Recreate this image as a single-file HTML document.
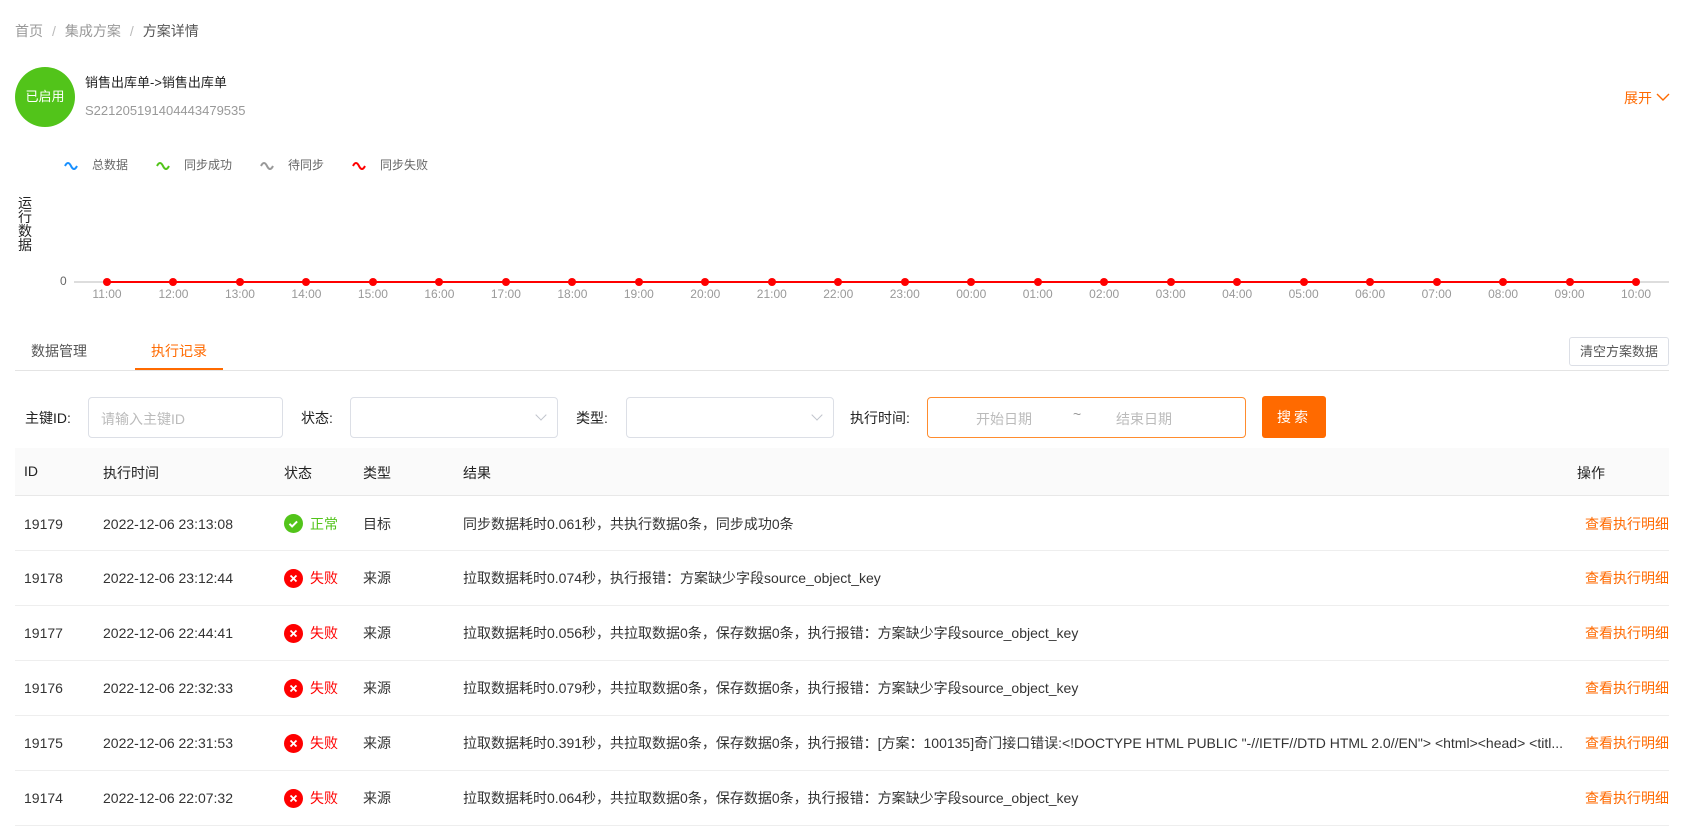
<!DOCTYPE html>
<html><head><meta charset="utf-8"><style>
*{margin:0;padding:0;box-sizing:border-box}
body{width:1685px;height:835px;background:#fff;font-family:"Liberation Sans","Noto Sans CJK SC",sans-serif;color:#333;position:relative;overflow:hidden;font-size:14px}
.a{position:absolute;white-space:nowrap}
.g{color:#999}
.tick{position:absolute;top:287px;font-size:12px;color:#999;width:50px;text-align:center}
.dot{position:absolute;top:278px;width:8px;height:8px;border-radius:50%;background:#f00}
.row{position:absolute;left:15px;width:1654px;height:55px;border-bottom:1px solid #eee}
.row .a{top:50%;transform:translateY(-50%)}
.ico{display:inline-block;width:19px;height:19px;border-radius:50%;color:#fff;text-align:center;vertical-align:middle;position:relative}
.op{color:#ff6a00;left:1570px}
.inp{position:absolute;border:1px solid #dcdfe6;border-radius:4px;height:41px;top:397px}
.chev{position:absolute;right:12px;top:13px;width:8px;height:8px;border-right:1px solid #c0c4cc;border-bottom:1px solid #c0c4cc;transform:rotate(45deg)}
</style></head><body>
<div class="a" style="left:15px;top:21px;font-size:14px"><span class="g">首页</span><span style="color:#bbb;margin:0 9px">/</span><span class="g">集成方案</span><span style="color:#bbb;margin:0 9px">/</span><span style="color:#555">方案详情</span></div>
<div class="a" style="left:15px;top:67px;width:60px;height:60px;border-radius:50%;background:#52c41a;color:#fff;font-size:13px;line-height:60px;text-align:center">已启用</div>
<div class="a" style="left:85px;top:72px;font-size:13px;color:#222">销售出库单-&gt;销售出库单</div>
<div class="a" style="left:85px;top:103px;font-size:13px;color:#999">S221205191404443479535</div>
<div class="a" style="left:1624px;top:88px;font-size:14px;color:#ff6a00">展开 <svg width="14" height="10" viewBox="0 0 14 10" style="vertical-align:1px"><path d="M1 2l6 6 6-6" stroke="#ff6a00" stroke-width="1.4" fill="none"/></svg></div>

<svg class="a" style="left:64px;top:159px" width="360" height="12">
<path d="M1 7 q3 -6 6 0 t6 0" stroke="#1890ff" stroke-width="2" fill="none"/>
<path d="M93 7 q3 -6 6 0 t6 0" stroke="#52c41a" stroke-width="2" fill="none"/>
<path d="M197 7 q3 -6 6 0 t6 0" stroke="#999" stroke-width="2" fill="none"/>
<path d="M289 7 q3 -6 6 0 t6 0" stroke="#f00" stroke-width="2" fill="none"/>
</svg>
<div class="a" style="left:92px;top:156px;font-size:12px;color:#666">总数据</div>
<div class="a" style="left:184px;top:156px;font-size:12px;color:#666">同步成功</div>
<div class="a" style="left:288px;top:156px;font-size:12px;color:#666">待同步</div>
<div class="a" style="left:380px;top:156px;font-size:12px;color:#666">同步失败</div>
<div class="a" style="left:18px;top:196px;font-size:14px;line-height:14px;width:15px;white-space:normal;color:#222">运行数据</div>
<div class="a" style="left:60px;top:274px;font-size:12px;color:#666">0</div>
<div class="a" style="left:74px;top:281px;width:1595px;height:2px;background:#ddd"></div>
<div class="a" style="left:107px;top:281px;width:1529px;height:2px;background:#f00"></div>
<div id="ch"></div>

<div class="a" style="left:31px;top:341px;color:#555">数据管理</div>
<div class="a" style="left:151px;top:341px;color:#ff6a00">执行记录</div>
<div class="a" style="left:15px;top:370px;width:1654px;height:1px;background:#e4e4e4"></div>
<div class="a" style="left:135px;top:368px;width:88px;height:2px;background:#ff6a00"></div>
<div class="a" style="left:1569px;top:337px;width:100px;height:29px;border:1px solid #dcdfe6;border-radius:3px;color:#555;font-size:13px;line-height:27px;text-align:center">清空方案数据</div>

<div class="a" style="left:25px;top:408px;color:#222">主键ID:</div>
<div class="inp" style="left:88px;width:195px"><span class="a" style="left:12px;top:11px;color:#bbb">请输入主键ID</span></div>
<div class="a" style="left:301px;top:408px;color:#222">状态:</div>
<div class="inp" style="left:350px;width:208px"><div class="chev"></div></div>
<div class="a" style="left:576px;top:408px;color:#222">类型:</div>
<div class="inp" style="left:626px;width:208px"><div class="chev"></div></div>
<div class="a" style="left:850px;top:408px;color:#222">执行时间:</div>
<div class="inp" style="left:927px;width:319px;border-color:#ff8c2e"><span class="a" style="left:48px;top:11px;color:#bbb">开始日期</span><span class="a" style="left:145px;top:8px;color:#999">~</span><span class="a" style="left:188px;top:11px;color:#bbb">结束日期</span></div>
<div class="a" style="left:1262px;top:396px;width:64px;height:42px;background:#ff6a00;border-radius:3px;color:#fff;line-height:42px;text-align:center;letter-spacing:3px">搜索</div>

<div class="a" style="left:15px;top:448px;width:1654px;height:48px;background:#fafafa;border-bottom:1px solid #e8e8e8"></div>
<div class="a" style="left:24px;top:463px;color:#222">ID</div>
<div class="a" style="left:103px;top:463px;color:#222">执行时间</div>
<div class="a" style="left:284px;top:463px;color:#222">状态</div>
<div class="a" style="left:363px;top:463px;color:#222">类型</div>
<div class="a" style="left:463px;top:463px;color:#222">结果</div>
<div class="a" style="left:1577px;top:463px;color:#222">操作</div>

<div id="rows"></div>
<script>
var ch=document.getElementById('ch'),h='';
for(var i=0;i<24;i++){var x=107+i*66.48;var t=((11+i)%24);h+='<div class="dot" style="left:'+(x-4)+'px"></div><div class="tick" style="left:'+(x-25)+'px">'+(t<10?'0':'')+t+':00</div>';}
ch.innerHTML=h;
var R=[['19179','2022-12-06 23:13:08',1,'目标','同步数据耗时0.061秒，共执行数据0条，同步成功0条'],
['19178','2022-12-06 23:12:44',0,'来源','拉取数据耗时0.074秒，执行报错：方案缺少字段source_object_key'],
['19177','2022-12-06 22:44:41',0,'来源','拉取数据耗时0.056秒，共拉取数据0条，保存数据0条，执行报错：方案缺少字段source_object_key'],
['19176','2022-12-06 22:32:33',0,'来源','拉取数据耗时0.079秒，共拉取数据0条，保存数据0条，执行报错：方案缺少字段source_object_key'],
['19175','2022-12-06 22:31:53',0,'来源','拉取数据耗时0.391秒，共拉取数据0条，保存数据0条，执行报错：[方案：100135]奇门接口错误:&lt;!DOCTYPE HTML PUBLIC "-//IETF//DTD HTML 2.0//EN"&gt; &lt;html&gt;&lt;head&gt; &lt;titl...'],
['19174','2022-12-06 22:07:32',0,'来源','拉取数据耗时0.064秒，共拉取数据0条，保存数据0条，执行报错：方案缺少字段source_object_key']];
var tops=[497,551,606,661,716,771],s='';
R.forEach(function(r,i){
var ic=r[2]?'<span class="ico" style="background:#52c41a"><svg width="19" height="19" viewBox="0 0 19 19"><path d="M5.5 9.8l2.6 2.6 5-5" stroke="#fff" stroke-width="2" fill="none"/></svg></span><span style="color:#52c41a;margin-left:7px;vertical-align:middle">正常</span>':'<span class="ico" style="background:#f00"><svg width="19" height="19" viewBox="0 0 19 19"><path d="M6.5 6.5l6 6M12.5 6.5l-6 6" stroke="#fff" stroke-width="1.8"/></svg></span><span style="color:#f00;margin-left:7px;vertical-align:middle">失败</span>';
s+='<div class="row" style="top:'+tops[i]+'px;height:'+(tops[i+1]?tops[i+1]-tops[i]:55)+'px"><span class="a" style="left:9px;color:#333">'+r[0]+'</span><span class="a" style="left:88px">'+r[1]+'</span><span class="a" style="left:269px">'+ic+'</span><span class="a" style="left:348px">'+r[3]+'</span><span class="a" style="left:448px;font-size:14px">'+r[4]+'</span><span class="a op" style="left:1570px">查看执行明细</span></div>';});
document.getElementById('rows').innerHTML=s;
</script>
</body></html>
